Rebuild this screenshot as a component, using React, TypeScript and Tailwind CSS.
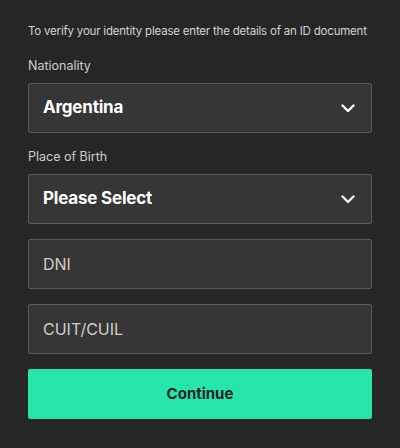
import React from "react";

function Chevron() {
  return (
    <svg width="14" height="9" viewBox="0 0 14 9" fill="none">
      <path d="M1.5 1.5L7 7L12.5 1.5" stroke="white" strokeWidth="2.4" strokeLinecap="round" strokeLinejoin="round" />
    </svg>
  );
}

function SelectBox({ value }: { value: string }) {
  return (
    <div className="flex h-[50px] items-center justify-between rounded-[2px] border border-[#5a5a5a] bg-[#363636] pl-[14px] pr-[16px]">
      <span className="text-[17px] font-bold tracking-[-0.2px] text-white">{value}</span>
      <Chevron />
    </div>
  );
}

function InputBox({ placeholder }: { placeholder: string }) {
  return (
    <div className="flex h-[50px] items-center rounded-[2px] border border-[#5a5a5a] bg-[#363636] pl-[14px]">
      <span className="text-[16px] text-[#cfcfcf]">{placeholder}</span>
    </div>
  );
}

export default function App() {
  return (
    <div
      className="h-[448px] w-[400px] bg-[#262626] px-[28px] pt-[22px]"
      style={{ fontFamily: "Inter, 'Noto Sans', sans-serif" }}
    >
      <p className="whitespace-nowrap text-[11.5px] leading-[18px] tracking-[-0.2px] text-[#d4d4d4]">
        To verify your identity please enter the details of an ID document
      </p>
      <div className="mt-[17px] mb-[8px] text-[12.5px] leading-[18px] text-[#cfcfcf]">Nationality</div>
      <SelectBox value="Argentina" />
      <div className="mt-[15px] mb-[8px] text-[12.5px] leading-[18px] text-[#cfcfcf]">Place of Birth</div>
      <SelectBox value="Please Select" />
      <div className="mt-[15px]">
        <InputBox placeholder="DNI" />
      </div>
      <div className="mt-[15px]">
        <InputBox placeholder="CUIT/CUIL" />
      </div>
      <button className="mt-[15px] flex h-[50px] w-full items-center justify-center rounded-[2px] bg-[#27e4ab] text-[15px] font-bold text-[#14241e]">
        Continue
      </button>
    </div>
  );
}
